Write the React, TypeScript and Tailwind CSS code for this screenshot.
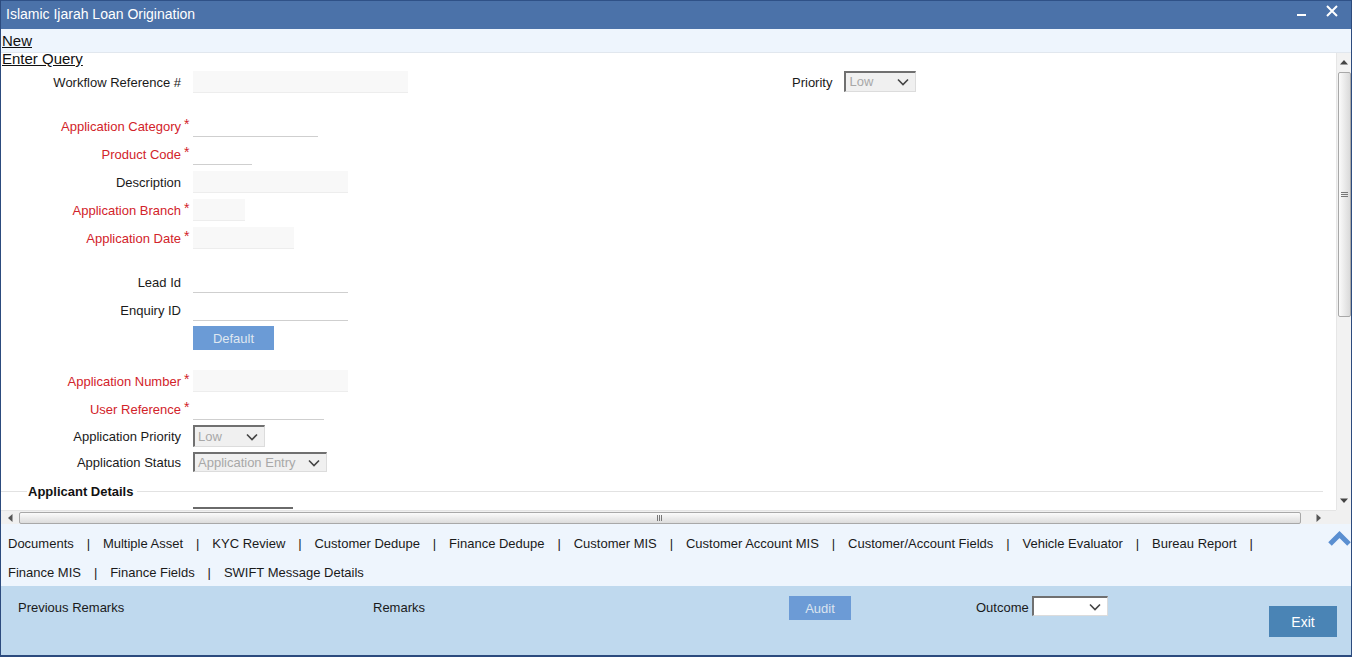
import React from "react";

const RED = "text-[#d2232a]";

type Field = {
  label: string;
  required?: boolean;
  kind: "fill" | "line";
  width: string;
};

const Chevron = ({ className = "" }: { className?: string }) => (
  <svg width="12" height="8" viewBox="0 0 12 8" className={className}>
    <path d="M1 1.5 L6 6.5 L11 1.5" fill="none" stroke="#444" strokeWidth="1.6" />
  </svg>
);

const Select = ({ value, width, height = "h-[22px]", white = false }: { value: string; width: string; height?: string; white?: boolean }) => (
  <div
    className={`${width} ${height} flex items-center justify-between pl-[3px] pr-[6px] border-t-2 border-l-2 border-[#707070] border-b border-r border-b-[#dcdcdc] border-r-[#dcdcdc] ${
      white ? "bg-white" : "bg-[#f0f0f0]"
    }`}
  >
    <span className="text-[13px] leading-none text-[#a8a8a8] whitespace-nowrap">{value}</span>
    <Chevron />
  </div>
);

const Input = ({ kind, width }: { kind: "fill" | "line"; width: string }) =>
  kind === "fill" ? (
    <div className={`${width} h-[22px] bg-[#f8f8f8] border-b border-[#ededed]`} />
  ) : (
    <div className={`${width} h-[22px] border-b border-[#cfcfcf]`} />
  );

const Row = ({ f, className = "" }: { f: Field; className?: string }) => (
  <div className={`flex items-center h-[28px] ${className}`}>
    <div className={`w-[180px] text-right text-[13px] leading-none ${f.required ? RED : "text-[#1a1a1a]"}`}>{f.label}</div>
    <div className="w-[12px] h-full">
      {f.required && <div className={`${RED} text-[14px] leading-[14px] pl-[3px] mt-[5px]`}>*</div>}
    </div>
    <Input kind={f.kind} width={f.width} />
  </div>
);

const group1: Field[] = [
  { label: "Application Category", required: true, kind: "line", width: "w-[125px]" },
  { label: "Product Code", required: true, kind: "line", width: "w-[59px]" },
  { label: "Description", kind: "fill", width: "w-[155px]" },
  { label: "Application Branch", required: true, kind: "fill", width: "w-[52px]" },
  { label: "Application Date", required: true, kind: "fill", width: "w-[101px]" },
];

const group2: Field[] = [
  { label: "Lead Id", kind: "line", width: "w-[155px]" },
  { label: "Enquiry ID", kind: "line", width: "w-[155px]" },
];

const tabs1 = [
  "Documents",
  "Multiple Asset",
  "KYC Review",
  "Customer Dedupe",
  "Finance Dedupe",
  "Customer MIS",
  "Customer Account MIS",
  "Customer/Account Fields",
  "Vehicle Evaluator",
  "Bureau Report",
];
const tabs2 = ["Finance MIS", "Finance Fields", "SWIFT Message Details"];

const TabRow = ({ items, trailing }: { items: string[]; trailing?: boolean }) => (
  <div className="flex items-center h-[29px] text-[13px] leading-none text-[#1a1a1a] whitespace-nowrap">
    {items.map((t, i) => (
      <React.Fragment key={t}>
        {i > 0 && <span className="mx-[12.9px]">|</span>}
        <span>{t}</span>
      </React.Fragment>
    ))}
    {trailing && <span className="mx-[12.9px]">|</span>}
  </div>
);

export default function App() {
  return (
    <div className="w-[1352px] h-[657px] overflow-hidden bg-white flex flex-col border-l border-r border-b-2 border-[#2c4b7e] font-['Liberation_Sans',Arial,sans-serif]">
      {/* Title bar */}
      <div className="h-[29px] shrink-0 bg-[#4b72a9] border-t border-[#2f5187] flex items-center pl-[5px] pb-[2px]">
        <span className="text-white text-[14px] leading-none">Islamic Ijarah Loan Origination</span>
        <div className="ml-auto flex items-center">
          <div className="w-[9px] h-[2px] bg-white mt-[2px]" />
          <svg width="12" height="12" viewBox="0 0 12 12" className="ml-[20px] mr-[13px] -mt-[6px]">
            <path d="M1 1 L11 11 M11 1 L1 11" stroke="white" strokeWidth="2" />
          </svg>
        </div>
      </div>

      {/* Toolbar */}
      <div className="h-[24px] shrink-0 bg-[#eef5fd] border-b border-[#e1e7ee] pl-[1px]">
        <span className="text-[15px] leading-[18px] underline text-[#111]">New</span>
      </div>

      {/* Form + scrollbars */}
      <div className="h-[471px] shrink-0 flex">
        <div className="flex-1 flex flex-col min-w-0">
          <div className="h-[457px]">
            <div className="-mt-[3px] pl-[1px] text-[15px] leading-[18px] underline text-[#111]">Enter Query</div>

            <div className="flex items-center h-[28px]">
              <div className="w-[180px] text-right text-[13px] leading-none text-[#1a1a1a]">Workflow Reference #</div>
              <div className="w-[12px]" />
              <Input kind="fill" width="w-[215px]" />
              <div className="ml-[384px] text-[13px] leading-none text-[#1a1a1a]">Priority</div>
              <div className="ml-[12px] -mt-[2px]">
                <Select value="Low" width="w-[72px]" height="h-[21px]" />
              </div>
            </div>

            <div className="mt-[16px]">
              {group1.map((f) => (
                <Row key={f.label} f={f} />
              ))}
            </div>

            <div className="mt-[16px]">
              {group2.map((f) => (
                <Row key={f.label} f={f} />
              ))}
            </div>

            <div className="ml-[192px] mt-[2px] w-[81px] h-[24px] bg-[#6b9bd6] flex items-center justify-center text-[13px] leading-none text-[#dfe7f1]">
              Default
            </div>

            <Row className="mt-[17px]" f={{ label: "Application Number", required: true, kind: "fill", width: "w-[155px]" }} />
            <Row f={{ label: "User Reference", required: true, kind: "line", width: "w-[131px]" }} />

            <div className="flex items-center h-[26px]">
              <div className="w-[180px] text-right text-[13px] leading-none text-[#1a1a1a]">Application Priority</div>
              <div className="w-[12px]" />
              <Select value="Low" width="w-[72px]" />
            </div>
            <div className="flex items-center h-[26px]">
              <div className="w-[180px] text-right text-[13px] leading-none text-[#1a1a1a]">Application Status</div>
              <div className="w-[12px]" />
              <Select value="Application Entry" width="w-[134px]" height="h-[20px]" />
            </div>

            <div className="flex items-center h-[32px] mr-[13px]">
              <div className="w-[26px] h-px bg-[#e2e2e2]" />
              <span className="ml-[1px] mr-[4px] text-[13px] leading-none font-bold text-[#111]">Applicant Details</span>
              <div className="flex-1 h-px bg-[#e2e2e2]" />
            </div>
            <div className="ml-[192px] w-[100px] h-[3px] border-t-2 border-[#6a6a6a]" />
          </div>

          {/* Horizontal scrollbar */}
          <div className="h-[14px] bg-[#f0f0f0] border-t border-[#e4e4e4] flex items-center">
            <div className="w-[18px] flex justify-center">
              <svg width="5" height="8" viewBox="0 0 5 8">
                <path d="M4.5 0 L0 4 L4.5 8 Z" fill="#555" />
              </svg>
            </div>
            <div className="flex-1 h-[12px] rounded-[2px] border border-[#a8a8a8] bg-gradient-to-b from-[#fbfbfb] to-[#dcdcdc] flex items-center justify-center">
              <svg width="6" height="6" viewBox="0 0 6 6">
                <path d="M0.5 0 V6 M2.5 0 V6 M4.5 0 V6" stroke="#777" strokeWidth="1" />
              </svg>
            </div>
            <div className="w-[35px] flex justify-center">
              <svg width="5" height="8" viewBox="0 0 5 8">
                <path d="M0.5 0 L5 4 L0.5 8 Z" fill="#555" />
              </svg>
            </div>
          </div>
        </div>

        {/* Vertical scrollbar */}
        <div className="w-[15px] flex flex-col bg-[#f2f2f2]">
          <div className="h-[457px] flex flex-col items-center border-l border-[#e6e6e6]">
            <div className="h-[19px] flex items-center justify-center">
              <svg width="8" height="5" viewBox="0 0 8 5">
                <path d="M0 4.5 L4 0 L8 4.5 Z" fill="#444" />
              </svg>
            </div>
            <div className="w-[13px] h-[245px] rounded-[2px] border border-[#a8a8a8] bg-gradient-to-r from-[#fbfbfb] to-[#dadada] flex items-center justify-center">
              <svg width="7" height="6" viewBox="0 0 7 6">
                <path d="M0 0.5 H7 M0 2.5 H7 M0 4.5 H7" stroke="#777" strokeWidth="1" />
              </svg>
            </div>
            <div className="flex-1" />
            <div className="h-[19px] flex items-center justify-center">
              <svg width="8" height="5" viewBox="0 0 8 5">
                <path d="M0 0.5 L4 5 L8 0.5 Z" fill="#444" />
              </svg>
            </div>
          </div>
          <div className="h-[14px] bg-[#f0f0f0]" />
        </div>
      </div>

      {/* Tab links */}
      <div className="h-[62px] shrink-0 bg-[#eef5fd] pl-[7px] pt-[5px]">
        <div className="flex">
          <TabRow items={tabs1} trailing />
          <svg width="23" height="16" viewBox="0 0 23 16" className="ml-auto mt-[1px]">
            <path d="M2 14 L11.5 4.5 L21 14" fill="none" stroke="#5a8fd1" strokeWidth="5" />
          </svg>
        </div>
        <TabRow items={tabs2} />
      </div>

      {/* Footer */}
      <div className="flex-1 bg-[#bfd9ee] flex items-start pl-[17px] text-[13px] text-[#1a1a1a]">
        <span className="w-[355px] mt-[14px] leading-[16px]">Previous Remarks</span>
        <span className="w-[416px] mt-[14px] leading-[16px]">Remarks</span>
        <div className="mt-[10px] w-[62px] h-[24px] bg-[#6c9bd6] flex items-center justify-center leading-none text-[#dbe4ef]">
          Audit
        </div>
        <span className="ml-[125px] mt-[14px] leading-[16px]">Outcome</span>
        <div className="ml-[3px] mt-[10px]">
          <Select value="" width="w-[76px]" height="h-[20px]" white />
        </div>
        <div className="ml-auto mr-[14px] mt-[20px] w-[68px] h-[31px] bg-[#4a84b5] flex items-center justify-center text-white text-[14px] leading-none">
          Exit
        </div>
      </div>
    </div>
  );
}
